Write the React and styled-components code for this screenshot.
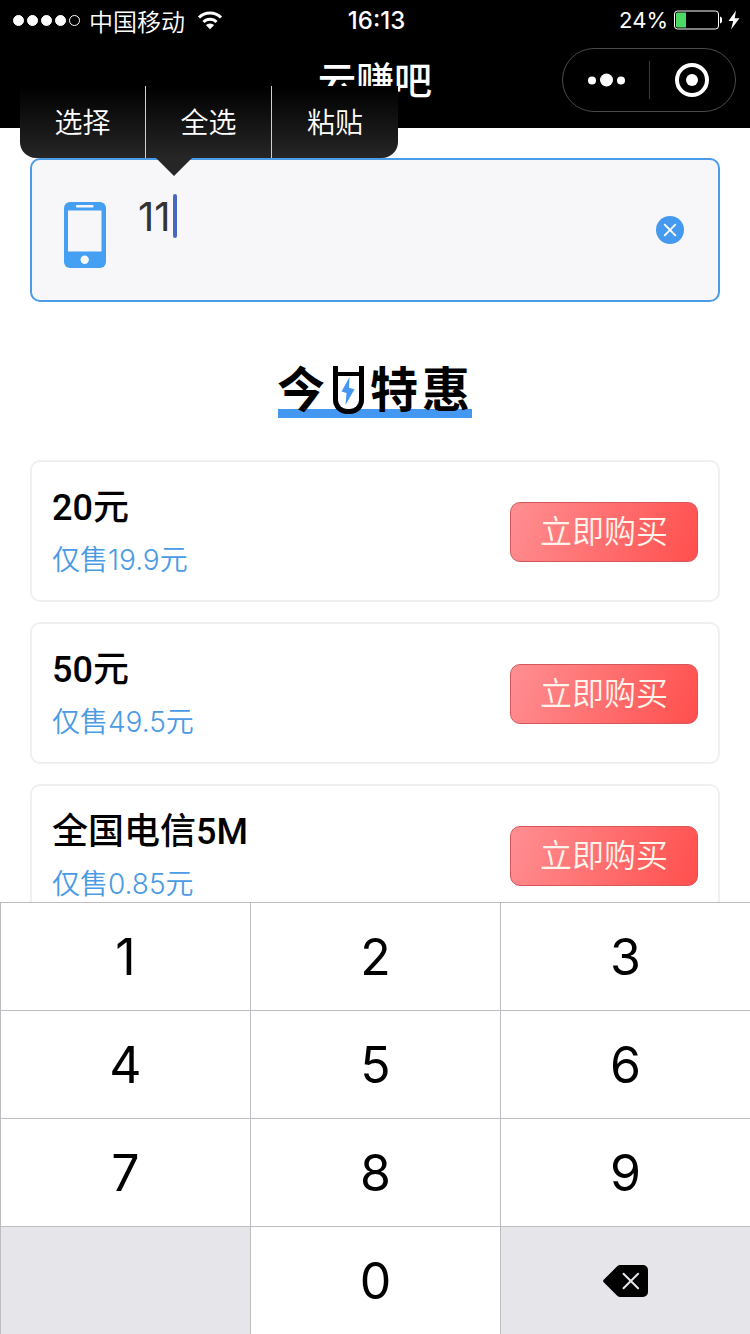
import React, { useState } from "react";
import styled, { createGlobalStyle } from "styled-components";

const GlobalStyle = createGlobalStyle`
  * {
    box-sizing: border-box;
  }

  body {
    margin: 0;
    background: #fff;
    color: #000;
    font-family: Inter, "Noto Sans CJK SC", sans-serif;
  }

  button {
    border: 0;
    padding: 0;
    background: none;
    color: inherit;
    font-family: inherit;
    cursor: pointer;
  }
`;

const Screen = styled.div`
  display: flex;
  flex-direction: column;
  height: 100vh;
  overflow: hidden;
`;

const Header = styled.header`
  flex: none;
  background: #000;
  color: #fff;
`;

const StatusBar = styled.div`
  display: grid;
  grid-template-columns: 1fr auto 1fr;
  align-items: center;
  height: 40px;
  padding: 0 10px 0 13px;
  font-size: 22px;
`;

const StatusGroup = styled.div`
  display: flex;
  align-items: center;
  justify-content: ${({ end }) => (end ? "flex-end" : "flex-start")};
  gap: ${({ end }) => (end ? "6px" : "0")};
`;

const Signal = styled.div`
  display: flex;
  gap: 3px;
`;

const SignalDot = styled.span`
  width: 11px;
  height: 11px;
  border: 1px solid #fff;
  border-radius: 50%;
  background: ${({ filled }) => (filled ? "#fff" : "transparent")};
`;

const Carrier = styled.span`
  margin: 0 12px 0 9px;
  font-size: 24px;
  font-weight: 350;
`;

const Clock = styled.span`
  font-size: 24px;
  font-weight: 500;
`;

const NavBar = styled.div`
  display: grid;
  grid-template-columns: 1fr auto 1fr;
  align-items: center;
  height: 88px;
  padding: 0 14px 8px;
`;

const NavTitle = styled.h1`
  grid-column: 2;
  margin: 0;
  font-size: 38px;
  font-weight: 500;
  line-height: 52px;
`;

const Capsule = styled.div`
  display: flex;
  align-items: center;
  justify-self: end;
  width: 174px;
  height: 64px;
  border: 1px solid #4a4a4a;
  border-radius: 32px;
`;

const CapsuleButton = styled.button`
  display: flex;
  flex: 1;
  align-items: center;
  justify-content: center;
  height: 38px;

  & + & {
    border-left: 1px solid #3a3a3a;
  }
`;

const Content = styled.main`
  flex: 1;
  min-height: 0;
  padding: 30px 30px 0;
`;

const Field = styled.div`
  position: relative;
  display: flex;
  align-items: flex-start;
  height: 144px;
  padding: 34px 34px 0 32px;
  border: 2px solid #4b9be6;
  border-radius: 10px;
  background: #f7f7fa;
`;

const FieldIcon = styled.label`
  display: flex;
  margin: 8px 32px 0 0;
`;

const NumberInput = styled.input`
  field-sizing: content;
  height: 44px;
  padding: 0;
  border: 0;
  outline: 0;
  background: transparent;
  caret-color: transparent;
  color: #333;
  font-family: inherit;
  font-size: 40px;
  font-weight: 400;
`;

const Caret = styled.span`
  width: 4px;
  height: 44px;
  margin-left: 2px;
  border-radius: 2px;
  background: #4a67c0;
`;

const ClearButton = styled.button`
  display: flex;
  margin: 22px 0 0 auto;
`;

const EditMenu = styled.div`
  position: absolute;
  bottom: calc(100% + 2px);
  left: -12px;
  display: flex;
  border-radius: 0 0 16px 16px;
  background: linear-gradient(#000, #262626);

  &::after {
    content: "";
    position: absolute;
    top: 100%;
    left: 136px;
    border: 18px solid transparent;
    border-top-color: #262626;
    border-bottom: 0;
  }
`;

const EditItem = styled.button`
  width: 126px;
  height: 72px;
  padding-bottom: 2px;
  color: #fff;
  font-size: 28px;
  font-weight: 350;

  &:not(:last-child) {
    border-right: 1px solid #d0d0d0;
  }
`;

const SectionTitle = styled.h2`
  display: flex;
  align-items: center;
  justify-content: center;
  gap: 4px;
  width: fit-content;
  height: 56px;
  margin: 60px auto 42px;
  padding-right: 3px;
  background: linear-gradient(#4598f2, #4598f2) center bottom /
    calc(100% - 2px) 9px no-repeat;
  font-size: 48px;
  font-weight: 700;
  line-height: 56px;
`;

const PowerCup = styled.span`
  position: relative;
  display: flex;
  align-items: center;
  justify-content: center;
  width: 31px;
  height: 48px;
  margin: 0 2px 0 4px;
  padding-top: 6px;
  border: 5px solid #000;
  border-top: 0;
  border-radius: 0 0 14px 14px;
  background: #fff;

  &::before {
    content: "";
    position: absolute;
    top: 6px;
    left: 0;
    width: 100%;
    height: 4px;
    background: #000;
  }
`;

const OfferList = styled.ul`
  display: flex;
  flex-direction: column;
  gap: 20px;
  margin: 0;
  padding: 0;
  list-style: none;
`;

const Offer = styled.li`
  display: flex;
  align-items: center;
  justify-content: space-between;
  padding: 20px 20px 14px;
  border: 2px solid #f0f0f2;
  border-radius: 10px;
`;

const OfferName = styled.h3`
  margin: 0;
  font-family: Roboto, "Noto Sans CJK SC", sans-serif;
  font-size: 36px;
  font-weight: 500;
  line-height: 52px;
`;

const OfferPrice = styled.p`
  margin: 0;
  color: #4a9be4;
  font-size: 28px;
  font-weight: 350;
  line-height: 52px;
`;

const BuyButton = styled.button`
  width: 188px;
  height: 60px;
  margin-bottom: 4px;
  padding-bottom: 6px;
  border: 1px solid #d4575b;
  border-radius: 10px;
  background: linear-gradient(110deg, #ff8f92, #ff4f4d);
  color: #fff4ec;
  font-size: 32px;
  font-weight: 350;
`;

const Keypad = styled.div`
  display: grid;
  flex: none;
  grid-template-columns: repeat(3, 1fr);
  grid-auto-rows: 108px;
  background: #fff;
`;

const Key = styled.button`
  display: flex;
  align-items: center;
  justify-content: center;
  border: solid #bcbcc1;
  border-width: 1px 0 0 1px;
  background: ${({ muted }) => (muted ? "#e6e5e9" : "#fff")};
  font-size: 50px;
`;

const offers = [
  { name: "20元", price: "仅售19.9元" },
  { name: "50元", price: "仅售49.5元" },
  { name: "全国电信5M", price: "仅售0.85元" },
];

const digits = ["1", "2", "3", "4", "5", "6", "7", "8", "9"];

const WifiIcon = () => (
  <svg width="26" height="20" viewBox="0 0 26 20" aria-hidden="true">
    <g fill="none" stroke="#fff" strokeWidth="3">
      <path d="M2 7.5a15.5 15.5 0 0 1 22 0" />
      <path d="M6.5 12a9.2 9.2 0 0 1 13 0" />
    </g>
    <path d="M13 19.3l-4.2-4.2a6 6 0 0 1 8.4 0z" fill="#fff" />
  </svg>
);

const BatteryIcon = () => (
  <svg width="48" height="20" viewBox="0 0 48 20" aria-hidden="true">
    <rect x="0.5" y="1" width="44" height="18" rx="3" fill="none" stroke="#fff" />
    <path d="M3.5 2.5H12v15H3.5A1.5 1.5 0 0 1 2 16V4a1.5 1.5 0 0 1 1.5-1.5z" fill="#4cd964" />
    <path d="M46 6.5c3 .8 3 6.200 0 7z" fill="#fff" />
  </svg>
);

const ChargeIcon = () => (
  <svg width="12" height="20" viewBox="0 0 12 20" aria-hidden="true">
    <path d="M8 0.5L0.5 11h4.7L3 19.5 11.5 8.3H6.7z" fill="#fff" />
  </svg>
);

const MoreIcon = () => (
  <svg width="38" height="14" viewBox="0 0 38 14" fill="#fff" aria-hidden="true">
    <circle cx="5" cy="7.5" r="4" />
    <circle cx="19.5" cy="7" r="6.5" />
    <circle cx="34" cy="7.5" r="4" />
  </svg>
);

const TargetIcon = () => (
  <svg width="34" height="34" viewBox="0 0 34 34" aria-hidden="true">
    <circle cx="17" cy="17" r="15" fill="none" stroke="#fff" strokeWidth="4" />
    <circle cx="17" cy="17" r="6" fill="#fff" />
  </svg>
);

const PhoneIcon = () => (
  <svg width="42" height="66" viewBox="0 0 42 66" aria-hidden="true">
    <rect width="42" height="66" rx="6" fill="#459ff3" />
    <rect x="4" y="8.5" width="33.5" height="41" fill="#f7f7fa" />
    <rect x="12" y="3" width="17.5" height="2.4" rx="1" fill="#f7f7fa" />
    <circle cx="20.7" cy="57.7" r="4.2" fill="#f7f7fa" />
  </svg>
);

const ClearIcon = () => (
  <svg width="28" height="28" viewBox="0 0 28 28" aria-hidden="true">
    <circle cx="14" cy="14" r="14" fill="#459af0" />
    <path d="M8.7 8.7l10.6 10.6M19.3 8.7L8.7 19.3" stroke="#fff" strokeWidth="1.9" strokeLinecap="round" />
  </svg>
);

const BoltIcon = () => (
  <svg width="14" height="28" viewBox="0 0 14 28" aria-hidden="true">
    <path d="M8.5 0L0.5 14.5l5 1.5L4.5 28 13.5 12.3l-5.5-1.5z" fill="#4598f2" />
  </svg>
);

const DeleteIcon = () => (
  <svg width="46" height="32" viewBox="0 0 46 32" aria-hidden="true">
    <path d="M0.7 14.8L14.2 1.3Q15.5 0 17.5 0H40a5 5 0 0 1 5 5v22a5 5 0 0 1-5 5H17.5q-2 0-3.3-1.3L0.7 17.2q-1.2-1.2 0-2.4z" />
    <path d="M20.5 8.7l14.6 14.6M35.1 8.7L20.5 23.3" stroke="#e6e5e9" strokeWidth="2" strokeLinecap="round" />
  </svg>
);

const App = () => {
  const [number, setNumber] = useState("11");
  const pressHandler = (digit) => setNumber(number + digit);

  return (
    <Screen>
      <GlobalStyle />
      <Header>
        <StatusBar>
          <StatusGroup>
            <Signal>
              <SignalDot filled />
              <SignalDot filled />
              <SignalDot filled />
              <SignalDot filled />
              <SignalDot />
            </Signal>
            <Carrier>中国移动</Carrier>
            <WifiIcon />
          </StatusGroup>
          <Clock>16:13</Clock>
          <StatusGroup end>
            <span>24%</span>
            <BatteryIcon />
            <ChargeIcon />
          </StatusGroup>
        </StatusBar>
        <NavBar>
          <NavTitle>云赚吧</NavTitle>
          <Capsule>
            <CapsuleButton aria-label="更多">
              <MoreIcon />
            </CapsuleButton>
            <CapsuleButton aria-label="关闭">
              <TargetIcon />
            </CapsuleButton>
          </Capsule>
        </NavBar>
      </Header>

      <Content>
        <Field>
          <FieldIcon htmlFor="phone" aria-label="手机号">
            <PhoneIcon />
          </FieldIcon>
          <NumberInput
            id="phone"
            type="tel"
            value={number}
            onChange={(event) => setNumber(event.target.value)}
          />
          <Caret />
          <ClearButton aria-label="清除" onClick={() => setNumber("")}>
            <ClearIcon />
          </ClearButton>
          <EditMenu>
            <EditItem>选择</EditItem>
            <EditItem>全选</EditItem>
            <EditItem>粘贴</EditItem>
          </EditMenu>
        </Field>

        <SectionTitle>
          <span>今</span>
          <PowerCup role="img" aria-label="日">
            <BoltIcon />
          </PowerCup>
          <span>特</span>
          <span>惠</span>
        </SectionTitle>

        <OfferList>
          {offers.map(({ name, price }) => (
            <Offer key={name}>
              <div>
                <OfferName>{name}</OfferName>
                <OfferPrice>{price}</OfferPrice>
              </div>
              <BuyButton>立即购买</BuyButton>
            </Offer>
          ))}
        </OfferList>
      </Content>

      <Keypad>
        {digits.map((digit) => (
          <Key key={digit} onClick={() => pressHandler(digit)}>
            {digit}
          </Key>
        ))}
        <Key as="div" muted />
        <Key onClick={() => pressHandler("0")}>0</Key>
        <Key muted aria-label="删除" onClick={() => setNumber(number.slice(0, -1))}>
          <DeleteIcon />
        </Key>
      </Keypad>
    </Screen>
  );
};

export default App;
